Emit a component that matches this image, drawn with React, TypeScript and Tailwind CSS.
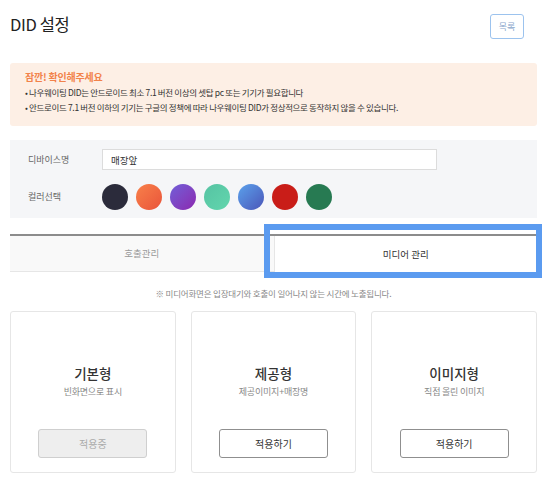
const colors = [
  'bg-[#2b2b3b]',
  'bg-gradient-to-br from-[#f8804a] to-[#e9533a]',
  'bg-gradient-to-br from-[#6f5ed8] to-[#8a24b0]',
  'bg-gradient-to-br from-[#56c3a3] to-[#62d6ad]',
  'bg-gradient-to-br from-[#5aa2ec] to-[#4a55b8]',
  'bg-[#c91d18]',
  'bg-[#277a52]',
];

const mediaTypes = [
  { title: '기본형', desc: '빈화면으로 표시', active: true },
  { title: '제공형', desc: '제공이미지+매장명', active: false },
  { title: '이미지형', desc: '직접 올린 이미지', active: false },
];

export default function App() {
  return (
    <div className="w-[550px] h-[490px] bg-white pl-[10px] pr-[13px] overflow-hidden font-['Noto_Sans_CJK_KR','Noto_Sans',sans-serif] text-[#333]">
      {/* Header */}
      <div className="flex items-start justify-between pt-[14px]">
        <h1 className="text-[16.5px] leading-[22px] mt-[-1px] text-[#222] tracking-[-0.4px]">DID 설정</h1>
        <button className="w-[34px] h-[25px] mr-[13px] border border-[#9cc3ee] rounded-[3px] text-[9px] text-[#8aa7cc]">
          목록
        </button>
      </div>

      {/* Notice */}
      <div className="mt-[24px] bg-[#fdefe5] rounded-[3px] px-[15px] pt-[8px] pb-[11px]">
        <p className="text-[10px] leading-[12px] font-bold text-[#f2824a] tracking-[-0.2px]">잠깐! 확인해주세요</p>
        <ul className="mt-[2px] text-[8.5px] leading-[15px] text-[#333] tracking-[-0.35px]">
          <li>• 나우웨이팅 DID는 안드로이드 최소 7.1 버전 이상의 셋탑 pc 또는 기기가 필요합니다</li>
          <li>• 안드로이드 7.1 버전 이하의 기기는 구글의 정책에 따라 나우웨이팅 DID가 정상적으로 동작하지 않을 수 있습니다.</li>
        </ul>
      </div>

      {/* Settings */}
      <div className="mt-[14px] bg-[#f5f6f8] pl-[18px] pt-[9px] pb-[8px] flex flex-col gap-[14px]">
        <div className="flex items-center">
          <span className="w-[74px] text-[9px] text-[#666]">디바이스명</span>
          <input
            defaultValue="매장앞"
            className="w-[335px] h-[21px] bg-white border border-[#dcdcdc] px-[8px] text-[9.5px] text-[#333] outline-none"
          />
        </div>
        <div className="flex items-center">
          <span className="w-[74px] text-[9px] text-[#666]">컬러선택</span>
          <div className="flex gap-[8px]">
            {colors.map((c, i) => (
              <div key={i} className={`w-[26px] h-[26px] rounded-full ${c}`} />
            ))}
          </div>
        </div>
      </div>

      {/* Tabs */}
      <div className="mt-[16px] border-t-2 border-[#8c8c8c] grid grid-cols-2">
        <div className="h-[36px] flex items-center justify-center bg-[#f9f9f9] border-b border-[#e6e6e6] text-[9.5px] text-[#999]">
          호출관리
        </div>
        <div className="relative h-[36px] flex items-center justify-center bg-white border-l border-[#e6e6e6] text-[9.5px] text-[#333]">
          미디어 관리
          <div className="absolute left-[-11px] top-[-12px] right-[-5px] bottom-[-6px] border-[6px] border-[#5b9bf0] pointer-events-none" />
        </div>
      </div>

      <p className="mt-[14px] text-center text-[8.5px] leading-[14px] text-[#888] tracking-[-0.2px]">
        ※ 미디어화면은 입장대기와 호출이 일어나지 않는 시간에 노출됩니다.
      </p>

      {/* Media type cards */}
      <div className="mt-[11px] grid grid-cols-3 gap-[15px]">
        {mediaTypes.map((m) => (
          <div
            key={m.title}
            className="h-[162px] border border-[#e6e6e6] rounded-[3px] flex flex-col items-center pt-[51px]"
          >
            <p className="text-[13.5px] leading-[20px] font-medium text-[#333]">{m.title}</p>
            <p className="mt-[2px] text-[9px] leading-[13px] text-[#888] tracking-[-0.2px]">{m.desc}</p>
            {m.active ? (
              <button className="mt-[31px] w-[109px] h-[29px] bg-[#eeeeee] border border-[#cfcfcf] rounded-[3px] text-[10px] text-[#aaa]">
                적용중
              </button>
            ) : (
              <button className="mt-[31px] w-[109px] h-[29px] bg-white border border-[#8f8f8f] rounded-[3px] text-[10px] text-[#333]">
                적용하기
              </button>
            )}
          </div>
        ))}
      </div>
    </div>
  );
}
